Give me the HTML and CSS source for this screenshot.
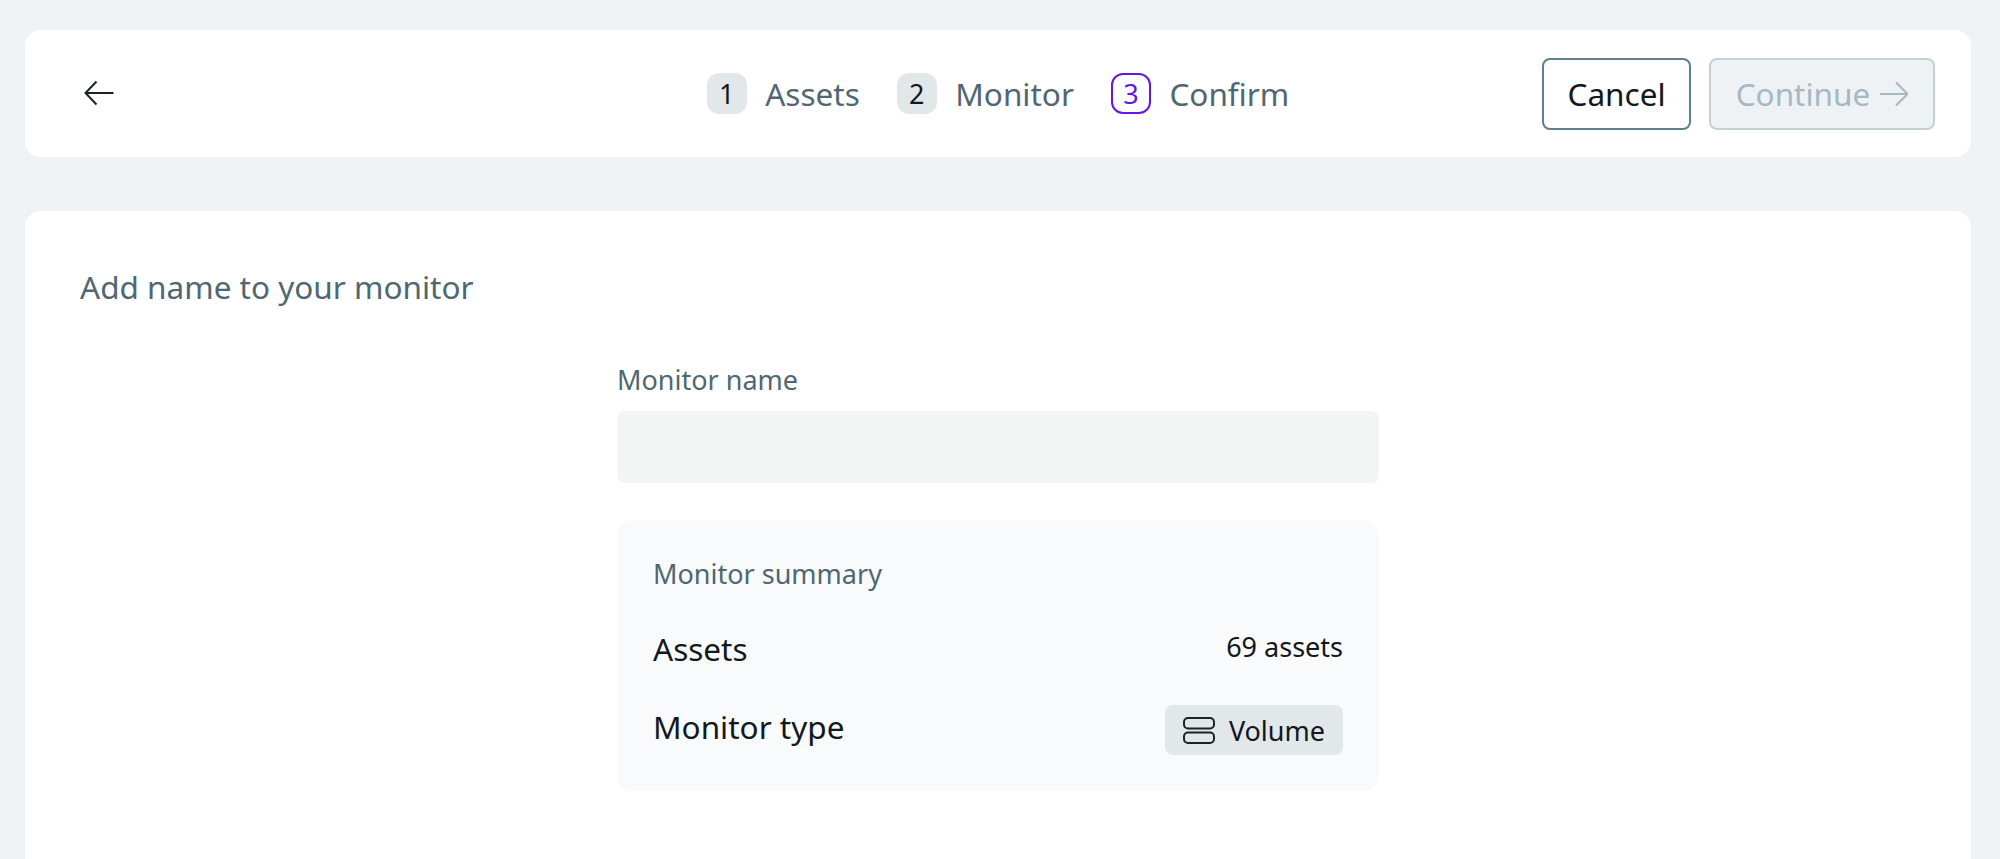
FILE: index.html
```html
<!DOCTYPE html>
<html lang="en">
<head>
<meta charset="utf-8">
<title>Add monitor</title>
<link rel="stylesheet" href="styles.css">
</head>
<body>
<div class="page">
  <header class="card topbar">
    <button class="back" aria-label="Back">
      <svg width="30" height="26" viewBox="0 0 30 26" fill="none" stroke="#1c2328" stroke-width="2"><path d="M29.5 13H1.5M12.5 1.5 1.5 13 12.5 24.5"/></svg>
    </button>
    <nav class="steps">
      <div class="step"><span class="num">1</span><span class="step-label">Assets</span></div>
      <div class="step"><span class="num">2</span><span class="step-label">Monitor</span></div>
      <div class="step"><span class="num current">3</span><span class="step-label">Confirm</span></div>
    </nav>
    <div class="actions">
      <button class="btn cancel">Cancel</button>
      <button class="btn continue">Continue
        <svg width="28" height="26" viewBox="0 0 28 26" fill="none" stroke="#a6b8c2" stroke-width="2"><path d="M0 13H27M16 1.5 27.5 13 16 24.5"/></svg>
      </button>
    </div>
  </header>
  <main class="card content">
    <h1 class="title">Add name to your monitor</h1>
    <div class="form">
      <label class="field-label" for="name">Monitor name</label>
      <input class="input" id="name" type="text">
      <section class="summary">
        <h2 class="summary-title">Monitor summary</h2>
        <div class="row assets-row"><span class="row-label">Assets</span><span class="row-value">69 assets</span></div>
        <div class="row type-row"><span class="row-label">Monitor type</span>
          <span class="tag">
            <svg width="32" height="27" viewBox="0 0 32 27" fill="none" stroke="#1c2328" stroke-width="2"><rect x="1" y="1" width="30" height="10.5" rx="4"/><rect x="1" y="15.5" width="30" height="10.5" rx="4"/></svg>
            Volume
          </span>
        </div>
      </section>
    </div>
  </main>
</div>
</body>
</html>
```
FILE: styles.css
```css
* { box-sizing: border-box; }
html, body { margin: 0; height: 100%; }
body {
  background: #eff3f6;
  font-family: "Noto Sans", "Open Sans", sans-serif;
  color: #12181c;
  overflow: hidden;
}
.page {
  display: flex;
  flex-direction: column;
  gap: 54px;
  padding: 30px 29px 0 25px;
  height: 100%;
}
.card { background: #fff; border-radius: 16px; }
.topbar {
  height: 127px;
  display: grid;
  grid-template-columns: 1fr auto 1fr;
  align-items: center;
  padding: 0 36px;
  flex: none;
}
.back { background: none; border: 0; padding: 0; margin: -1px 0 0 23px; width: 30px; height: 26px; justify-self: start; display: flex; }
.steps { display: flex; gap: 37px; }
.step { display: flex; align-items: center; gap: 18.5px; }
.num {
  width: 40px; height: 41px;
  display: flex; align-items: center; justify-content: center;
  background: #e2e7ea;
  border-radius: 12px;
  font-size: 27px;
}
.num.current { background: #fff; border: 2px solid #6317e6; color: #6317e6; }
.step-label { font-size: 31.5px; color: #4f6772; }
.actions { display: flex; gap: 18px; justify-self: end; }
.btn {
  height: 72px;
  border-radius: 8px;
  font: inherit;
  font-size: 31.5px;
  display: flex; align-items: center; justify-content: center; gap: 10px;
  padding: 0;
}
.cancel { width: 149px; background: #fff; border: 2px solid #5e7f91; color: #12181c; }
.continue { width: 226px; background: #eff2f4; border: 2px solid #c3d0d7; color: #a6b8c2; }
.content { flex: 1; padding: 56px 55px; border-bottom-left-radius: 0; border-bottom-right-radius: 0; }
.title { margin: 0; font-size: 31.5px; font-weight: 400; line-height: 40px; color: #4f6772; }
.form { width: 762px; margin: 56px 0 0 537px; display: flex; flex-direction: column; }
.field-label { font-size: 27px; line-height: 34px; color: #4f6772; }
.input { height: 72px; margin-top: 14px; background: #f3f5f5; border: 0; border-radius: 8px; }
.summary { margin-top: 37px; height: 271px; padding: 36px; background: #f8fafc; border-radius: 16px; }
.summary-title { margin: 0; font-size: 27px; font-weight: 400; line-height: 36px; color: #4f6772; }
.row { display: flex; justify-content: space-between; align-items: center; }
.assets-row { margin-top: 37px; height: 40px; }
.type-row { margin-top: 36px; height: 50px; }
.row-label { font-size: 31.5px; line-height: 40px; }
.type-row .row-label { margin-bottom: 6px; }
.row-value { font-size: 27px; line-height: 36px; margin-bottom: 4px; }
.tag {
  height: 50px; padding: 0 18px;
  display: flex; align-items: center; gap: 14px;
  background: #e2e7ea; border-radius: 8px;
  font-size: 27px;
}
```
